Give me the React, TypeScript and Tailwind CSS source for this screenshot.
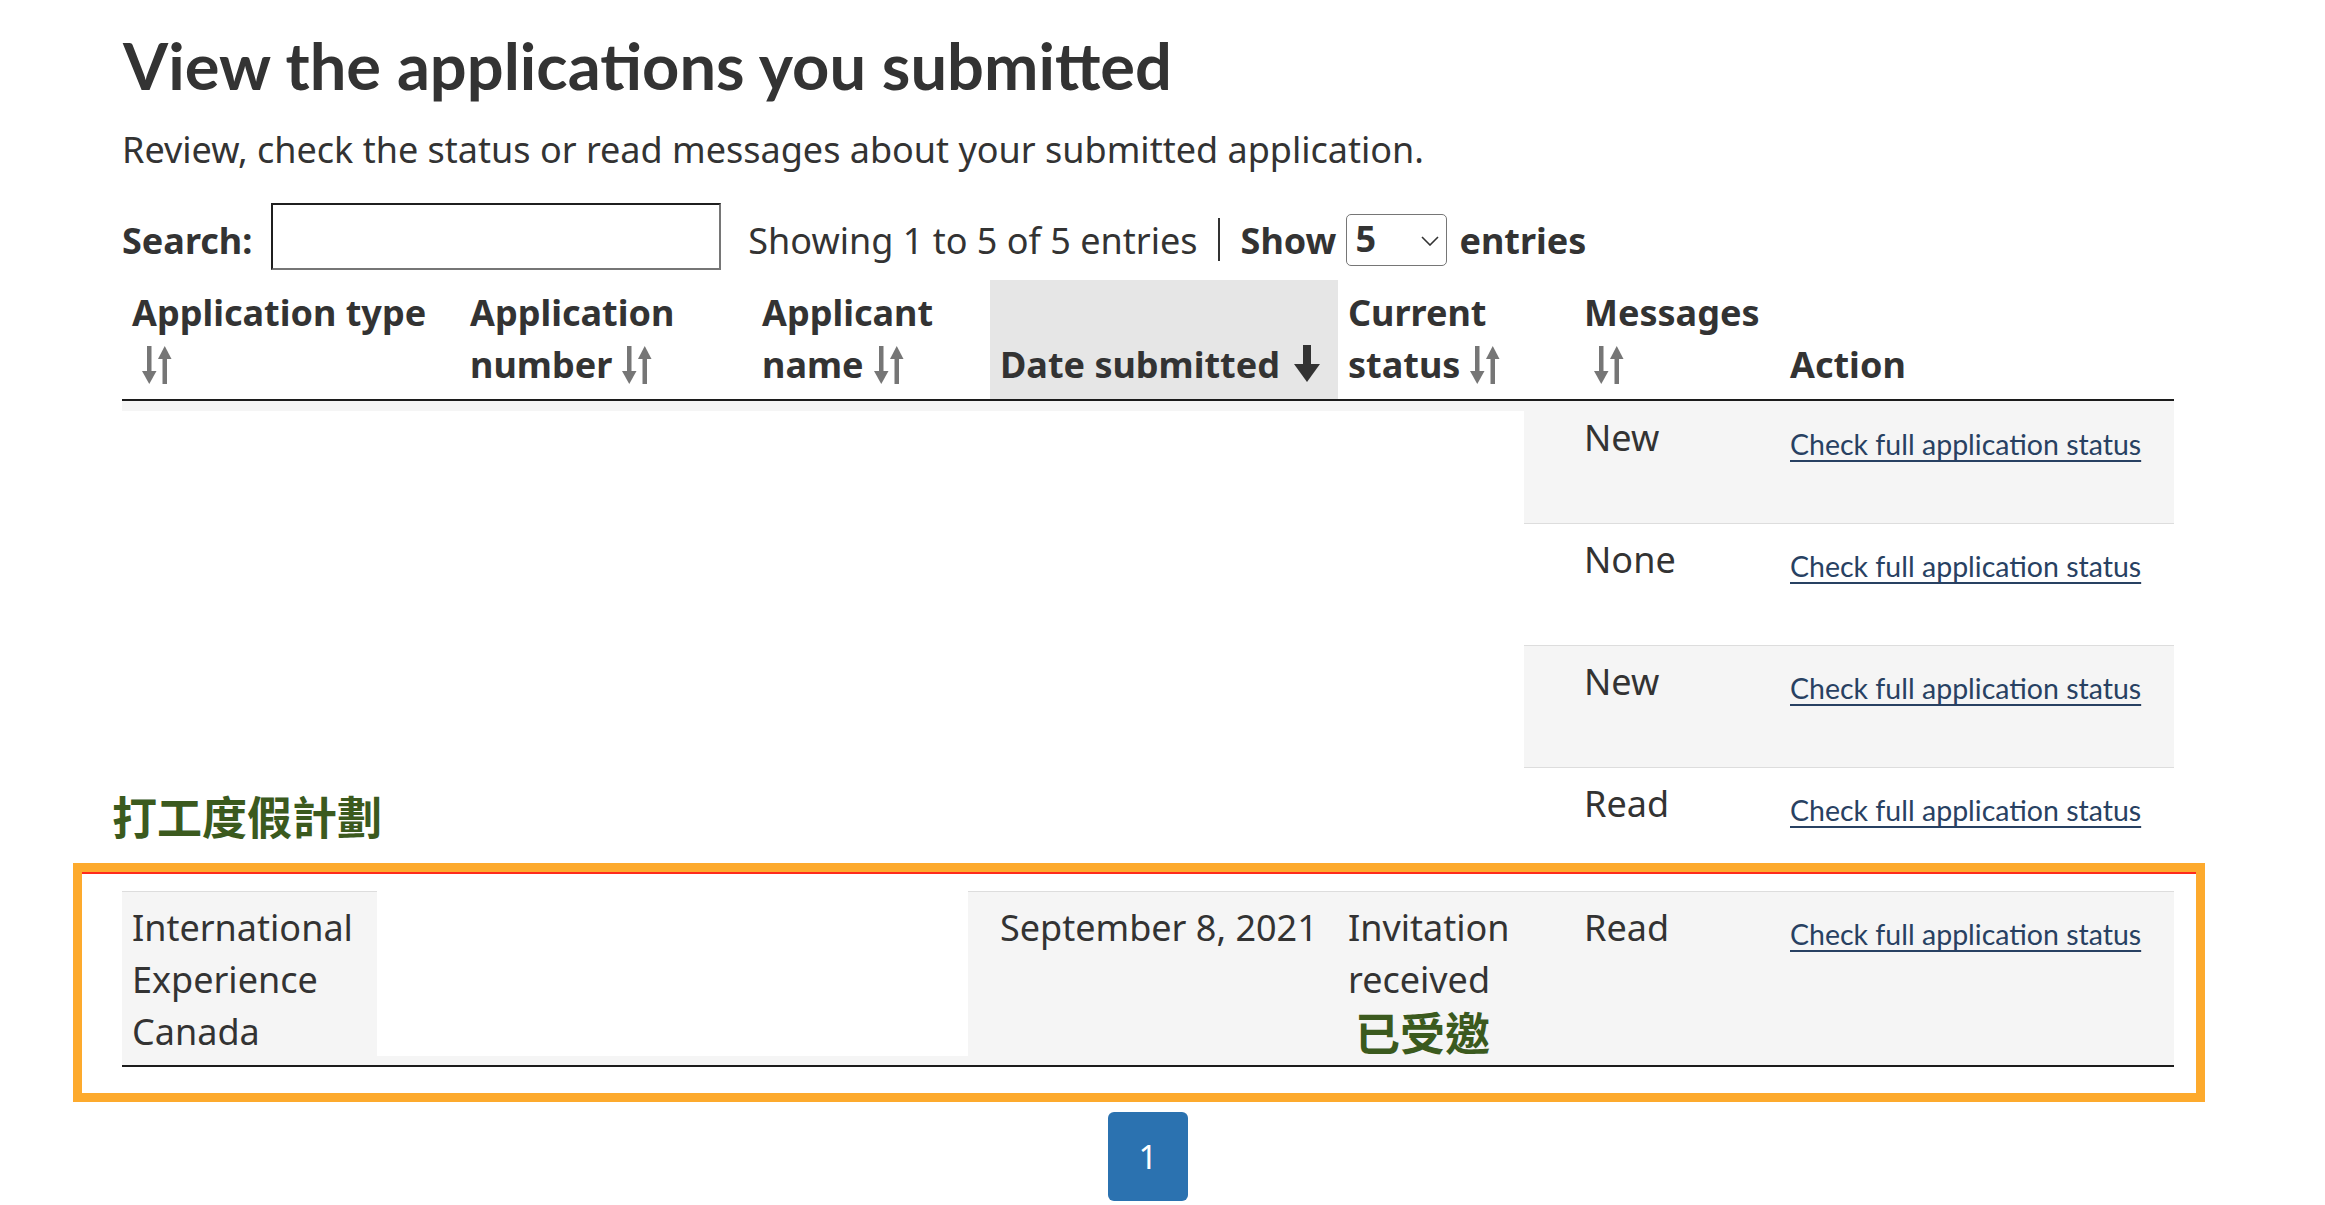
import React from "react";

const SortIcon = () => (
  <svg
    width="34"
    height="38"
    viewBox="0 0 34 38"
    className="inline-block align-[-6px] ml-[8px]"
    fill="#767676"
  >
    <rect x="7" y="0" width="4.5" height="27" />
    <polygon points="2,25 16.5,25 9.25,38" />
    <rect x="22.5" y="11" width="4.5" height="27" />
    <polygon points="18,13 31.5,13 24.75,0" />
  </svg>
);

const DownArrow = () => (
  <svg
    width="26"
    height="37"
    viewBox="0 0 26 37"
    className="inline-block align-[-4px] ml-[14px]"
    fill="#333333"
  >
    <rect x="9" y="0" width="8" height="22" />
    <polygon points="0,19 26,19 13,37" />
  </svg>
);

const Link = () => (
  <a
    href="#"
    className="mt-[6px] block font-['Lato'] text-[28.5px] leading-[52px] text-[#284162] underline decoration-[2px] underline-offset-[5px] whitespace-nowrap"
  >
    Check full application status
  </a>
);

const cols = "grid grid-cols-[338px_292px_238px_348px_236px_206px_394px]";

type RowProps = {
  bg: string;
  msg: string;
  h: string;
  top?: boolean;
};

const SimpleRow = ({ bg, msg, h, top }: RowProps) => (
  <div className={`${cols} ${bg} ${h} ${top ? "border-t border-[#dddddd]" : ""}`}>
    <div />
    <div />
    <div />
    <div />
    <div />
    <div className={`px-[10px] ${top ? "pt-[10px]" : "pt-[11px]"}`}>{msg}</div>
    <div className={`px-[10px] ${top ? "pt-[10px]" : "pt-[11px]"}`}>
      <Link />
    </div>
  </div>
);

export default function App() {
  return (
    <div className="relative min-h-screen w-[2325px] bg-white font-['Noto_Sans',sans-serif] text-[#333333]">
      <div className="w-[2174px] pl-[122px] pt-[25px]">
        <h1 className="ml-[1px] font-['Lato',sans-serif] text-[65px] font-bold leading-[80px] text-[#333333]">
          View the applications you submitted
        </h1>
        <p className="mt-[19px] text-[36px] leading-[52px]">
          Review, check the status or read messages about your submitted application.
        </p>

        <div className="mt-[27px] flex h-[67px] items-center text-[36px]">
          <label className="mt-[8px] font-bold">Search:</label>
          <input
            type="text"
            aria-label="Search"
            className="ml-[19px] h-[67px] w-[450px] border-2 border-t-[#1f1f1f] border-l-[#1f1f1f] border-r-[#767676] border-b-[#767676] bg-white"
          />
          <span className="ml-[27px] mt-[8px]">Showing 1 to 5 of 5 entries</span>
          <span className="ml-[20px] mt-[5px] h-[43px] w-[2px] bg-[#333333]" />
          <span className="ml-[21px] mt-[8px] font-bold">Show</span>
          <div className="relative ml-[10px] mt-[6px] h-[52px] w-[101px] rounded-[5px] border border-[#767676] bg-white">
            <span className="absolute left-[8px] top-[-2px] text-[36px] font-bold leading-[52px]">5</span>
            <svg
              width="18"
              height="10"
              viewBox="0 0 18 10"
              className="absolute right-[7px] top-[21px]"
              fill="none"
              stroke="#333333"
              strokeWidth="1.6"
            >
              <polyline points="1,1 9,9 17,1" />
            </svg>
          </div>
          <span className="ml-[12px] mt-[8px] font-bold">entries</span>
        </div>

        {/* table */}
        <div className="mt-[10px] w-[2052px] text-[36px] leading-[52px]">
          <div className={`${cols} h-[121px] border-b-2 border-[#1c1c1c] font-bold`}>
            <div className="flex flex-col justify-end px-[10px] pb-[8px]">
              <div className="whitespace-nowrap">Application type</div>
              <div>
                <SortIcon />
              </div>
            </div>
            <div className="flex flex-col justify-end px-[10px] pb-[8px]">
              <div>Application</div>
              <div>
                number
                <SortIcon />
              </div>
            </div>
            <div className="flex flex-col justify-end px-[10px] pb-[8px]">
              <div>Applicant</div>
              <div>
                name
                <SortIcon />
              </div>
            </div>
            <div className="flex flex-col justify-end bg-[#e6e6e6] px-[10px] pb-[8px]">
              <div className="whitespace-nowrap">
                Date submitted
                <DownArrow />
              </div>
            </div>
            <div className="flex flex-col justify-end px-[10px] pb-[8px]">
              <div>Current</div>
              <div>
                status
                <SortIcon />
              </div>
            </div>
            <div className="flex flex-col justify-end px-[10px] pb-[8px]">
              <div>Messages</div>
              <div>
                <SortIcon />
              </div>
            </div>
            <div className="flex flex-col justify-end px-[10px] pb-[8px]">
              <div>Action</div>
            </div>
          </div>

          <SimpleRow bg="bg-[#f5f5f5]" msg="New" h="h-[122px]" />
          <SimpleRow bg="bg-white" msg="None" h="h-[122px]" top />
          <SimpleRow bg="bg-[#f5f5f5]" msg="New" h="h-[122px]" top />
          <SimpleRow bg="bg-white" msg="Read" h="h-[124px]" top />

          <div className={`${cols} h-[176px] border-t border-b-2 border-t-[#dddddd] border-b-[#1c1c1c] bg-[#f5f5f5]`}>
            <div className="px-[10px] pt-[10px]">
              <div>International</div>
              <div>Experience</div>
              <div>Canada</div>
            </div>
            <div />
            <div />
            <div className="whitespace-nowrap px-[10px] pt-[10px]">September 8, 2021</div>
            <div className="px-[10px] pt-[10px]">
              <div>Invitation</div>
              <div>received</div>
              <div className="ml-[7px] font-['Noto_Sans_CJK_TC',sans-serif] text-[45px] font-bold leading-[52px] text-[#3b5a1e]">
                已受邀
              </div>
            </div>
            <div className="px-[10px] pt-[10px]">Read</div>
            <div className="px-[10px] pt-[10px]">
              <Link />
            </div>
          </div>
        </div>

        <div className="mt-[45px] flex w-[2052px] justify-center">
          <a
            href="#"
            className="flex h-[89px] w-[80px] items-center justify-center rounded-[6px] bg-[#2b72b0] text-[33px] text-white"
          >
            1
          </a>
        </div>
      </div>

      {/* privacy covers */}
      <div className="pointer-events-none absolute left-[122px] top-[411px] h-[452px] w-[1402px] bg-white" />
      <div className="pointer-events-none absolute left-[377px] top-[890px] h-[166px] w-[591px] bg-white" />

      {/* annotations */}
      <div className="pointer-events-none absolute left-[112px] top-[790px] font-['Noto_Sans_CJK_TC',sans-serif] text-[45px] font-bold leading-[52px] text-[#3b5a1e]">
        打工度假計劃
      </div>
      <div className="pointer-events-none absolute left-[73px] top-[863px] h-[239px] w-[2132px] border-[9px] border-[#fdaa2d]" />
      <div className="pointer-events-none absolute left-[82px] top-[872px] h-[2px] w-[2114px] bg-[#ff2b1c]" />
    </div>
  );
}
